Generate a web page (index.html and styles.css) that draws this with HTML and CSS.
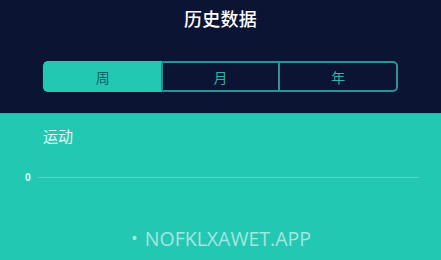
FILE: index.html
```html
<!DOCTYPE html>
<html lang="zh">
<head>
<meta charset="utf-8">
<link rel="stylesheet" href="styles.css">
</head>
<body>
<div class="page">
  <header class="top">
    <h1 class="title">历史数据</h1>
    <div class="seg">
      <div class="seg-item active">周</div>
      <div class="seg-item">月</div>
      <div class="seg-item">年</div>
    </div>
  </header>
  <section class="panel">
    <div class="panel-title">运动</div>
    <div class="axis">
      <span class="axis-label">0</span>
      <span class="axis-line"></span>
    </div>
    <div class="watermark"><span class="dot">•</span>NOFKLXAWET.APP</div>
  </section>
</div>
</body>
</html>
```
FILE: styles.css
```css
html, body {
  margin: 0;
  padding: 0;
}
body {
  width: 441px;
  height: 260px;
  overflow: hidden;
  background: #23c8b3;
  font-family: "Noto Sans CJK SC", "Noto Sans", sans-serif;
}
.page {
  display: flex;
  flex-direction: column;
  height: 260px;
}
.top {
  background: #0b1433;
  height: 113px;
  box-sizing: border-box;
  padding-top: 5px;
  display: flex;
  flex-direction: column;
  align-items: center;
}
.title {
  margin: 0;
  font-size: 18px;
  font-weight: 500;
  color: #ffffff;
  line-height: 26px;
  letter-spacing: 0.3px;
}
.seg {
  margin-top: 30px;
  width: 355px;
  height: 31px;
  display: flex;
}
.seg-item {
  flex: 1;
  box-sizing: border-box;
  display: flex;
  align-items: center;
  justify-content: center;
  font-size: 14px;
  color: #2ab5aa;
  border: 2px solid #2a9396;
  border-left: none;
}
.seg-item:first-child {
  border-left: 2px solid #2a9396;
  border-radius: 5px 0 0 5px;
}
.seg-item:last-child {
  border-radius: 0 5px 5px 0;
}
.seg-item.active {
  background: #23c8b3;
  border-color: #23c8b3;
  border-right-color: #1f8f8f;
  color: #1b5f68;
}
.panel {
  flex: 1;
  background: #23c8b3;
  border-top: 1px solid #1fb7a4;
  display: flex;
  flex-direction: column;
  padding-left: 25px;
  padding-right: 22px;
}
.panel-title {
  margin-top: 12px;
  margin-left: 18px;
  font-size: 15px;
  line-height: 20px;
  color: #e4f8f4;
}
.axis {
  margin-top: 25px;
  display: flex;
  align-items: center;
  gap: 7px;
}
.axis-label {
  font-family: "Noto Sans", sans-serif;
  font-size: 10px;
  font-weight: 700;
  color: #d2f3ee;
  line-height: 12px;
}
.axis-line {
  flex: 1;
  height: 1px;
  background: #55d6c6;
}
.watermark {
  margin-top: 42px;
  align-self: center;
  margin-left: -2px;
  font-family: "Open Sans", sans-serif;
  font-weight: 400;
  font-size: 19.5px;
  line-height: 26px;
  color: #a6e6e0;
}
.dot {
  font-size: 18px;
  margin-right: 7px;
  vertical-align: 1px;
}
```
